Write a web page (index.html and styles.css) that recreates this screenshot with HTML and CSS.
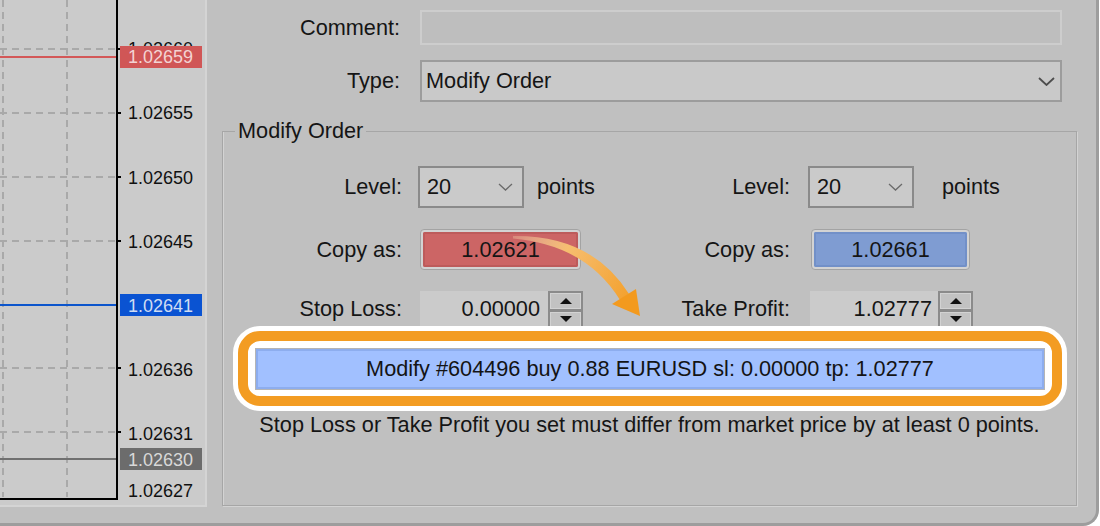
FILE: index.html
```html
<!DOCTYPE html>
<html lang="en">
  <head>
    <meta charset="UTF-8" />
    <meta name="viewport" content="width=device-width, initial-scale=1.0" />
    <title>Modify Order</title>
    <link rel="stylesheet" href="styles.css">
  </head>
  <body>
    <main class="window">
      <section class="chart-panel">
        <svg width="205" height="505" viewBox="0 0 205 505">
          <g stroke="#a9a9a9" stroke-width="2" stroke-dasharray="7 5">
            <line x1="3" y1="0" x2="3" y2="497" />
            <line x1="67" y1="0" x2="67" y2="497" />
            <line x1="0" y1="49" x2="116" y2="49" />
            <line x1="0" y1="113" x2="116" y2="113" />
            <line x1="0" y1="177" x2="116" y2="177" />
            <line x1="0" y1="241" x2="116" y2="241" />
            <line x1="0" y1="305" x2="116" y2="305" />
            <line x1="0" y1="368" x2="116" y2="368" />
            <line x1="0" y1="432" x2="116" y2="432" />
          </g>
          <g stroke="#000" stroke-width="2">
            <line x1="118" y1="49" x2="121" y2="49" />
            <line x1="118" y1="113" x2="121" y2="113" />
            <line x1="118" y1="177" x2="121" y2="177" />
            <line x1="118" y1="241" x2="121" y2="241" />
            <line x1="118" y1="368" x2="121" y2="368" />
            <line x1="118" y1="432" x2="121" y2="432" />
          </g>
          <rect x="116" y="0" width="2" height="500" fill="#000" />
          <rect x="0" y="498" width="118" height="2" fill="#000" />

          <g class="price">
            <text x="128" y="54.6">1.02660</text>
            <text x="128" y="119.4">1.02655</text>
            <text x="128" y="183.5">1.02650</text>
            <text x="128" y="247.7">1.02645</text>
            <text x="128" y="375.7">1.02636</text>
            <text x="128" y="440">1.02631</text>
            <text x="128" y="496.7">1.02627</text>
          </g>

          <!-- current levels -->
          <rect x="0" y="56" width="116" height="2" fill="#d35858" />
          <rect x="120" y="46" width="82" height="22" fill="#d05656" />
          <text class="price tag-red" x="128" y="63.3">1.02659</text>

          <rect x="0" y="304" width="116" height="2" fill="#0c55cc" />
          <rect x="120" y="294" width="82" height="22" fill="#0a53d2" />
          <text class="price tag-blue" x="128" y="311.7">1.02641</text>

          <rect x="0" y="458" width="116" height="2" fill="#707070" />
          <rect x="120" y="448" width="82" height="22" fill="#6c6c6c" />
          <text class="price tag-gray" x="128" y="466">1.02630</text>
        </svg>
      </section>

      <section class="dialog">
        <div class="top-form">
          <label>Comment:</label>
          <div class="comment-input"></div>
          <label>Type:</label>
          <div class="type-select">
            <span>Modify Order</span>
            <svg width="17" height="9" viewBox="0 0 17 9">
              <polyline points="1,1 8.5,8 16,1" fill="none" stroke="#4d4d4d" stroke-width="1.8" />
            </svg>
          </div>
        </div>

        <fieldset class="group">
          <legend>Modify Order</legend>
          <div class="group-grid">
            <label class="lbl">Level:</label>
            <div class="ctrl">
              <div class="level-select">
                <span>20</span>
                <svg width="15" height="8" viewBox="0 0 15 8">
                  <polyline points="1,1 7.5,7 14,1" fill="none" stroke="#6a6a6a" stroke-width="1.3" />
                </svg>
              </div>
              <span class="points">points</span>
            </div>
            <label class="lbl lbl-right">Level:</label>
            <div class="ctrl">
              <div class="level-select">
                <span>20</span>
                <svg width="15" height="8" viewBox="0 0 15 8">
                  <polyline points="1,1 7.5,7 14,1" fill="none" stroke="#6a6a6a" stroke-width="1.3" />
                </svg>
              </div>
              <span class="points points-wide">points</span>
            </div>

            <label class="lbl">Copy as:</label>
            <div class="ctrl">
              <div class="copy copy-red"><span>1.02621</span></div>
            </div>
            <label class="lbl lbl-right">Copy as:</label>
            <div class="ctrl">
              <div class="copy copy-blue"><span>1.02661</span></div>
            </div>

            <label class="lbl">Stop Loss:</label>
            <div class="ctrl">
              <div class="num">0.00000</div>
              <div class="spin"><span><i class="up"></i></span><span><i class="down"></i></span></div>
            </div>
            <label class="lbl lbl-right">Take Profit:</label>
            <div class="ctrl">
              <div class="num num-tp">1.02777</div>
              <div class="spin"><span><i class="up"></i></span><span><i class="down"></i></span></div>
            </div>
          </div>

          <div class="highlight">
            <button class="modify-btn">Modify #604496 buy 0.88 EURUSD sl: 0.00000 tp: 1.02777</button>
          </div>
          <p class="hint">Stop Loss or Take Profit you set must differ from market price by at least 0 points.</p>
        </fieldset>
      </section>

      <svg class="arrow" width="1100" height="526" viewBox="0 0 1100 526">
        <defs>
          <linearGradient id="arrowFill" gradientUnits="userSpaceOnUse" x1="513" y1="237" x2="640" y2="315">
            <stop offset="0" stop-color="#f8dcb0" stop-opacity="0.3" />
            <stop offset="0.35" stop-color="#f6be70" />
            <stop offset="1" stop-color="#f39a1e" />
          </linearGradient>
        </defs>
        <path d="M513 236 Q592 235 629 294 L620 300 Q586 245 513 238.5 Z" fill="url(#arrowFill)" />
        <path d="M612 304 L636 289 L640 316 Z" fill="#f39a1e" />
      </svg>
    </main>
  </body>
</html>
```

FILE: styles.css
```css
* {
  margin: 0;
  padding: 0;
  box-sizing: border-box;
}

body {
  background: #fff;
  font-family: "Liberation Sans", Arial, sans-serif;
  color: #151515;
}

.window {
  position: relative;
  display: flex;
  align-items: flex-start;
  width: 1099px;
  height: 526px;
  background: #c0c0c0;
  border-right: 3px solid #9d9d9d;
  border-bottom: 3px solid #9d9d9d;
  border-bottom-right-radius: 16px;
  overflow: hidden;
}

/* chart */

.chart-panel {
  flex-shrink: 0;
  width: 207px;
  height: 507px;
  background: #cbcbcb;
  border-right: 2px solid #d4d4d4;
  border-bottom: 2px solid #d4d4d4;
}

.chart-panel svg {
  display: block;
}

.price {
  font-family: "Liberation Sans", Arial, sans-serif;
  font-size: 18px;
  fill: #111;
}

.tag-red {
  fill: #f3d3d3;
}

.tag-blue {
  fill: #cfdcf3;
}

.tag-gray {
  fill: #d8d8d8;
}

/* dialog */

.dialog {
  flex: 1;
  padding: 10px 19px 0 15px;
  font-size: 21.7px;
  line-height: 26px;
}

.top-form {
  display: grid;
  grid-template-columns: 178px 1fr;
  grid-template-rows: 35px 42px;
  column-gap: 20px;
  row-gap: 15px;
  align-items: center;
  margin-right: 15px;
}

.top-form label {
  text-align: right;
}

.comment-input {
  height: 35px;
  border: 2px solid #cdcdcd;
  background: #bebebe;
}

.type-select {
  display: flex;
  align-items: center;
  justify-content: space-between;
  height: 42px;
  padding: 0 5px 0 4px;
  border: 2px solid #9c9c9c;
  background: #c9c9c9;
}

.group {
  height: 388px;
  margin-top: 16px;
  padding: 0;
  border: 1px solid #a6a6a6;
  box-shadow: inset 1px 0 0 #d3d3d3, 1px 1px 0 #d3d3d3;
}

.group legend {
  margin-left: 12px;
  padding: 0 3px;
  line-height: 26px;
}

.group-grid {
  display: grid;
  grid-template-columns: 195px 200px 190px 1fr;
  grid-template-rows: 42px 41px 36px;
  row-gap: 21px;
  align-items: center;
  margin-top: 22px;
}

.lbl {
  text-align: right;
  padding-right: 16px;
}

.lbl-right {
  padding-right: 18px;
}

.ctrl {
  display: flex;
  align-items: center;
}

.level-select {
  display: flex;
  align-items: center;
  justify-content: space-between;
  width: 106px;
  height: 42px;
  padding: 0 9px 0 7px;
  border: 2px solid #8a8a8a;
  background: #cacaca;
}

.points {
  margin-left: 13px;
}

.points-wide {
  margin-left: 28px;
}

.copy {
  width: 161px;
  height: 41px;
  margin-left: 2px;
  padding: 2px;
  border: 1px solid #a3a3a3;
  border-radius: 4px;
  background: #d3d3d3;
}

.copy span {
  display: flex;
  align-items: center;
  justify-content: center;
  height: 100%;
  border-radius: 2px;
}

.copy-red span {
  background: #cc6565;
  box-shadow: inset 0 0 0 2px #bd5b5b;
}

.copy-blue {
  width: 159px;
  margin-left: 3px;
}

.copy-blue span {
  background: #7f9cd2;
  box-shadow: inset 0 0 0 2px #7290c8;
}

.num {
  width: 128px;
  height: 36px;
  margin-left: 2px;
  padding-right: 8px;
  background: #cbcbcb;
  text-align: right;
  line-height: 36px;
}

.num-tp {
  padding-right: 6px;
}

.spin {
  display: flex;
  flex-direction: column;
  gap: 3px;
  width: 35px;
  height: 36px;
  border: 2px solid #8b8b8b;
  border-bottom: none;
  background: #8b8b8b;
}

.spin span {
  flex: 1;
  display: flex;
  align-items: center;
  justify-content: center;
  background: #c2c2c2;
  border: 1px solid #d2d2d2;
}

.up {
  border-left: 6px solid transparent;
  border-right: 6px solid transparent;
  border-bottom: 6px solid #111;
}

.down {
  border-left: 6px solid transparent;
  border-right: 6px solid transparent;
  border-top: 6px solid #111;
}

/* orange callout round the button */

.highlight {
  position: relative;
  margin: 4px 14px 0 15px;
  padding: 7px 7px 6px;
  border: 10px solid #f39c22;
  border-radius: 22px;
  background: #fff;
  box-shadow: 0 0 0 5px #fff;
}

.modify-btn {
  display: block;
  width: 100%;
  height: 42px;
  border: 1px solid #b5b5b5;
  background: #a1c0ff;
  box-shadow: inset 0 0 0 2px #8dadee;
  font: inherit;
  color: #141414;
}

.hint {
  margin-top: 6px;
  text-align: center;
}

.arrow {
  position: absolute;
  left: 0;
  top: 0;
  pointer-events: none;
}
```
